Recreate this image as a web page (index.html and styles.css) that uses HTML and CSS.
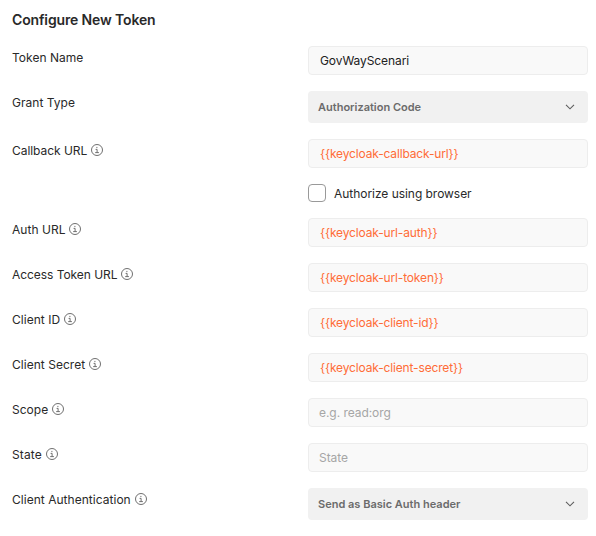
FILE: index.html
```html
<!DOCTYPE html>
<html lang="en">
<head>
<meta charset="utf-8">
<title>Configure New Token</title>
<link rel="stylesheet" href="styles.css">
</head>
<body>
<svg class="defs" width="0" height="0" aria-hidden="true">
  <symbol id="info" viewBox="0 0 12 12"><circle cx="6" cy="6" r="5.5"/><path d="M4.6 5.4H6.1V8.6M4.2 8.6H7.9M5.9 2.9V4.1"/></symbol>
  <symbol id="chevron" viewBox="0 0 10 6"><path d="M1 .8L5 4.8L9 .8"/></symbol>
</svg>
<main class="form">
  <h1 class="title">Configure New Token</h1>
  <div class="row"><label class="label">Token Name</label><div class="input dark">GovWayScenari</div></div>
  <div class="row"><label class="label">Grant Type</label><div class="select">Authorization Code<svg class="chevron"><use href="#chevron"/></svg></div></div>
  <div class="row after-select"><label class="label tight">Callback URL<svg class="info"><use href="#info"/></svg></label><div class="input">{{keycloak-callback-url}}</div></div>
  <div class="check"><span class="box"></span><span class="check-text">Authorize using browser</span></div>
  <div class="row"><label class="label">Auth URL<svg class="info"><use href="#info"/></svg></label><div class="input">{{keycloak-url-auth}}</div></div>
  <div class="row"><label class="label tight">Access Token URL<svg class="info"><use href="#info"/></svg></label><div class="input">{{keycloak-url-token}}</div></div>
  <div class="row"><label class="label">Client ID<svg class="info"><use href="#info"/></svg></label><div class="input">{{keycloak-client-id}}</div></div>
  <div class="row"><label class="label">Client Secret<svg class="info"><use href="#info"/></svg></label><div class="input">{{keycloak-client-secret}}</div></div>
  <div class="row"><label class="label">Scope<svg class="info"><use href="#info"/></svg></label><div class="input placeholder">e.g. read:org</div></div>
  <div class="row"><label class="label loose">State<svg class="info"><use href="#info"/></svg></label><div class="input placeholder">State</div></div>
  <div class="row"><label class="label">Client Authentication<svg class="info"><use href="#info"/></svg></label><div class="select">Send as Basic Auth header<svg class="chevron"><use href="#chevron"/></svg></div></div>
</main>
</body>
</html>
```
FILE: styles.css
```css
* { box-sizing: border-box; }
body { margin: 0; background: #fff; color: #292929; font: 12px/16px Inter, sans-serif; }
.defs { display: block; height: 0; }
.form { padding: 10px 8px 0 12px; }
.title { margin: 0 0 16px; font-size: 14px; line-height: 20px; font-weight: 600; letter-spacing: -.14px; }
.row { display: grid; grid-template-columns: 296px 280px; height: 45px; align-items: start; }
.after-select { margin-top: 3px; }
.label { display: flex; align-items: center; gap: 4px; padding-top: 3px; line-height: 18px; letter-spacing: .03px; }
.tight { letter-spacing: -.05px; }
.loose { letter-spacing: .15px; }
.info { width: 12px; height: 12px; margin-bottom: 2px; fill: none; stroke: #6f6f6f; stroke-width: 1; }
.input { height: 29px; border: 1px solid #ededed; border-radius: 4px; background: #f9f9f9; padding: 0 11px; line-height: 27px; color: #ff6c37; letter-spacing: -.15px; }
.dark { color: #212121; letter-spacing: -.08px; }
.placeholder { color: #a6a6a6; padding-left: 10px; letter-spacing: -.05px; }
.select { height: 32px; display: flex; align-items: center; justify-content: space-between; padding: 0 13px 0 10px; background: #f1f1f1; border-radius: 4px; color: #6b6b6b; font-size: 11px; font-weight: 600; }
.chevron { width: 10px; height: 6px; fill: none; stroke: #5c5c5c; stroke-width: 1.05; }
.check { display: flex; align-items: center; gap: 8px; margin: -1px 0 16px 296px; height: 19px; }
.box { width: 18px; height: 18px; border: 1px solid #999; border-radius: 4px; background: #fff; }
.check-text { padding-top: 2px; letter-spacing: -.04px; }
```
